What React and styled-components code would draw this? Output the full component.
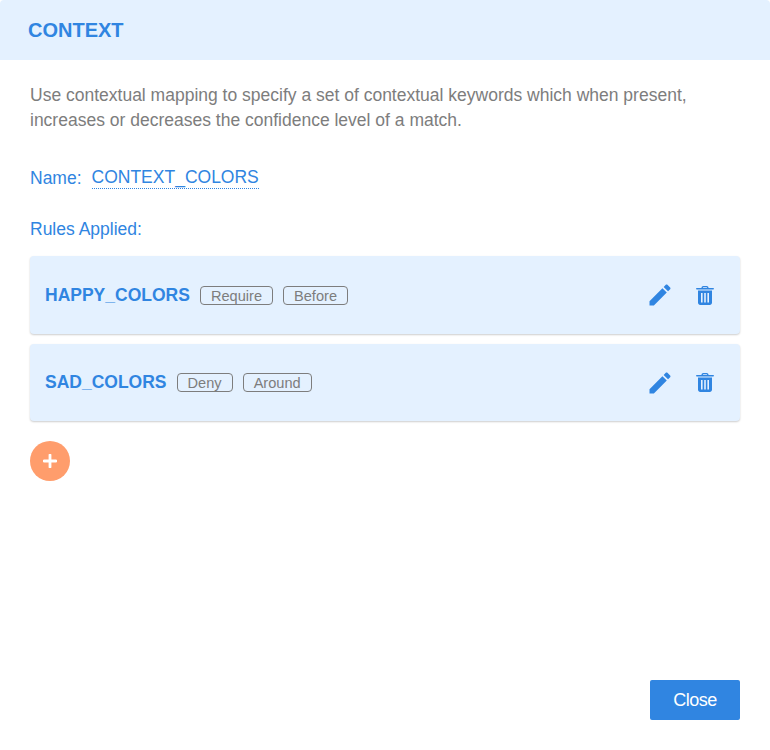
import React from "react";
import styled, { createGlobalStyle } from "styled-components";

const Global = createGlobalStyle`
  html, body { margin: 0; padding: 0; background: #fff; }
  body { font-family: "Liberation Sans", Arial, sans-serif; }
`;
const Dialog = styled.div`
  width: 770px; height: 750px; display: flex; flex-direction: column;
  background: #fff; border-radius: 4px; overflow: hidden; box-sizing: border-box;
`;
const Header = styled.header`
  height: 60px; flex: none; display: flex; align-items: center; padding-left: 28px;
  background: #e4f1ff; color: #3085e1; font-size: 20px; font-weight: 700;
`;
const Body = styled.main`
  flex: 1; display: flex; flex-direction: column; padding: 23px 30px 30px;
`;
const Description = styled.p`
  margin: 0; color: #7d7d7d; font-size: 17.5px; line-height: 25px;
`;
const NameRow = styled.div`
  display: flex; align-items: flex-start; margin-top: 33px; color: #3085e1; font-size: 17.5px; line-height: 24px;
`;
const NameValue = styled.span`
  margin-left: 10px; border-bottom: 1px dotted #3085e1; line-height: 22px;
`;
const RulesLabel = styled.div`
  margin-top: 27px; color: #3085e1; font-size: 17.5px; line-height: 24px;
`;
const List = styled.div`
  margin-top: 15px; display: flex; flex-direction: column; gap: 10px;
`;
const Card = styled.div`
  height: ${p => p.$h}px; box-sizing: border-box; display: flex; align-items: center;
  padding: 0 26px 0 15px; background: #e4f1ff; border-radius: 4px;
  box-shadow: 0 1px 2px rgba(0,0,0,.2);
`;
const RuleName = styled.span`
  color: #3085e1; font-size: 17.5px; font-weight: 700; margin-right: 10px;
`;
const Tag = styled.span`
  height: 19px; box-sizing: border-box; padding: 0 10px; margin-right: 10px;
  border: 1px solid #7d7d7d; border-radius: 4px; color: #7d7d7d;
  font-size: 14.6px; line-height: 18px;
`;
const Actions = styled.div`
  margin-left: auto; display: flex; align-items: center; gap: 22px; color: #3085e1;
`;
const IconSvg = styled.svg`
  display: block; fill: currentColor; flex: none;
`;
const AddButton = styled.button`
  width: 40px; height: 40px; margin-top: 20px; padding: 0; border: 0; border-radius: 50%;
  background: #ff9d6c; display: flex; align-items: center; justify-content: center; color: #fff;
`;
const Footer = styled.div`
  margin-top: auto; display: flex; justify-content: flex-end;
`;
const CloseButton = styled.button`
  width: 90px; height: 40px; border: 0; border-radius: 2px; background: #3085e1; color: #fff;
  font-family: "Liberation Sans", Arial, sans-serif; font-size: 18px; letter-spacing: -.5px;
`;

const Pencil = () => (
  <IconSvg width="28" height="28" viewBox="0 0 24 24">
    <path d="M3 17.25V21h3.75L17.81 9.94l-3.75-3.75L3 17.25zM20.71 7.04c.39-.39.39-1.02 0-1.41l-2.34-2.34c-.39-.39-1.02-.39-1.41 0l-1.83 1.83 3.75 3.75 1.83-1.83z" />
  </IconSvg>
);
const Trash = () => (
  <IconSvg width="18" height="19" viewBox="0 0 18 19">
    <path fillRule="evenodd" d="M5.500 1.800C5.500.8 6.300 0 7.300 0h3.400c1 0 1.800.8 1.800 1.800V2h4.700c.4 0 .8.300.8.700s-.4.800-.8.800H.8C.4 3.500 0 3.100 0 2.700S.4 2 .8 2h4.700v-.2zM6.900 2h4.200v-.2c0-.3-.2-.5-.5-.5H7.400c-.3 0-.5.2-.5.5V2zM2 4.500h14v12.300c0 1.200-1 2.200-2.200 2.200H4.200C3 19 2 18 2 16.800V4.500zM5 7v9.500h1.600V7H5zm3.200 0v9.500h1.600V7H8.200zm3.200 0v9.500H13V7h-1.600z" />
  </IconSvg>
);
const Plus = () => (
  <svg width="14" height="14" viewBox="0 0 14 14" aria-hidden="true">
    <path d="M7 1v12M1 7h12" stroke="#fff" strokeWidth="2.8" strokeLinecap="round" />
  </svg>
);

const rules = [
  { name: "HAPPY_COLORS", tags: ["Require", "Before"], h: 78 },
  { name: "SAD_COLORS", tags: ["Deny", "Around"], h: 77 },
];

export default function App() {
  return (
    <Dialog>
      <Global />
      <Header>CONTEXT</Header>
      <Body>
        <Description>
          Use contextual mapping to specify a set of contextual keywords which when present,
          increases or decreases the confidence level of a match.
        </Description>
        <NameRow>Name:<NameValue>CONTEXT_COLORS</NameValue></NameRow>
        <RulesLabel>Rules Applied:</RulesLabel>
        <List>
          {rules.map(r => (
            <Card key={r.name} $h={r.h}>
              <RuleName>{r.name}</RuleName>
              {r.tags.map(t => <Tag key={t}>{t}</Tag>)}
              <Actions><Pencil /><Trash /></Actions>
            </Card>
          ))}
        </List>
        <AddButton aria-label="Add"><Plus /></AddButton>
        <Footer><CloseButton>Close</CloseButton></Footer>
      </Body>
    </Dialog>
  );
}
